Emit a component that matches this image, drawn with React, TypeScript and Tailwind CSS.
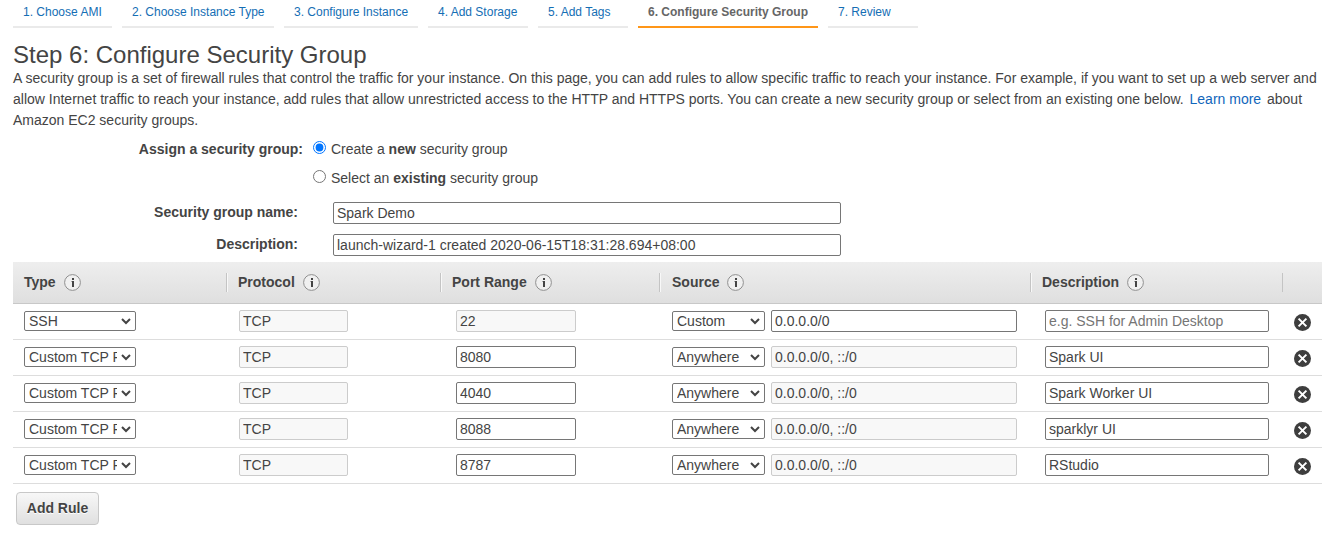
import React from "react";

const steps = [
  { label: "1. Choose AMI", width: "w-[99px]" },
  { label: "2. Choose Instance Type", width: "w-[152px]" },
  { label: "3. Configure Instance", width: "w-[134px]" },
  { label: "4. Add Storage", width: "w-[100px]" },
  { label: "5. Add Tags", width: "w-[90px]" },
  { label: "6. Configure Security Group", width: "w-[180px]", active: true },
  { label: "7. Review", width: "w-[90px]" },
];

const rules = [
  { type: "SSH", port: "22", source: "Custom", cidr: "0.0.0.0/0", description: "" },
  { type: "Custom TCP Rule", port: "8080", source: "Anywhere", cidr: "0.0.0.0/0, ::/0", description: "Spark UI" },
  { type: "Custom TCP Rule", port: "4040", source: "Anywhere", cidr: "0.0.0.0/0, ::/0", description: "Spark Worker UI" },
  { type: "Custom TCP Rule", port: "8088", source: "Anywhere", cidr: "0.0.0.0/0, ::/0", description: "sparklyr UI" },
  { type: "Custom TCP Rule", port: "8787", source: "Anywhere", cidr: "0.0.0.0/0, ::/0", description: "RStudio" },
];

const columns = "grid grid-cols-[213px_214px_219px_371px_252px_40px]";

function InfoIcon() {
  return (
    <svg width="17" height="17" viewBox="0 0 17 17" className="shrink-0">
      <circle cx="8.5" cy="8.5" r="7.9" fill="#f0f0f0" stroke="#8f8f8f" strokeWidth="1" />
      <rect x="8" y="4" width="2" height="2" fill="#444" />
      <path d="M7.2 7H10V13H8V7.6H7.2Z" fill="#444" />
    </svg>
  );
}

function RemoveIcon() {
  return (
    <svg width="17" height="17" viewBox="0 0 17 17">
      <circle cx="8.5" cy="8.5" r="8.5" fill="#3e3e3e" />
      <path d="M4.6 4.6L12.4 12.4M12.4 4.6L4.6 12.4" stroke="#fff" strokeWidth="2" />
    </svg>
  );
}

function TextField({
  value,
  width,
  disabled = false,
  placeholder,
}: {
  value: string;
  width: string;
  disabled?: boolean;
  placeholder?: string;
}) {
  return (
    <input
      type="text"
      defaultValue={value}
      disabled={disabled}
      placeholder={placeholder}
      className={`${width} h-[22px] shrink-0 rounded-[2px] border px-[3px] text-[14px] text-[#444] placeholder:text-[#757575] ${
        disabled ? "border-[#ccc] bg-[#f8f8f8]" : "border-[#767676] bg-white"
      }`}
    />
  );
}

function Select({ value, width }: { value: string; width: string }) {
  return (
    <div className={`${width} relative h-5 shrink-0`}>
      <select
        defaultValue={value}
        className="block h-5 w-full appearance-none rounded-[2px] border border-[#767676] bg-white pl-1 pr-[18px] text-[14px] leading-[18px] text-[#444]"
      >
        <option>{value}</option>
      </select>
      <svg width="10" height="7" viewBox="0 0 10 7" className="pointer-events-none absolute right-[5px] top-[7px]">
        <path d="M1 1L5 5L9 1" fill="none" stroke="#444" strokeWidth="2" />
      </svg>
    </div>
  );
}

function HeaderCell({ label, first = false, pad = "pl-[10px]" }: { label?: string; first?: boolean; pad?: string }) {
  return (
    <div className="flex h-[41px] items-center">
      {!first && (
        <span
          className={`-mt-px h-[19px] w-[2px] border-l border-l-[#c4c4c4] ${label ? "border-r border-r-[#f8f8f8]" : ""}`}
        />
      )}
      {label && (
        <div className={`flex items-center gap-[9px] ${pad}`}>
          <span className="-ml-px pl-px -mr-px">{label}</span>
          <InfoIcon />
        </div>
      )}
    </div>
  );
}

export default function App() {
  return (
    <div className="h-[536px] w-[1326px] overflow-hidden bg-white pl-[13px] font-['Liberation_Sans',Arial,sans-serif] text-[14px] text-[#444]">
      <nav className="flex h-7 gap-[10px] text-[12px]">
        {steps.map((step) => (
          <a
            key={step.label}
            className={`${step.width} h-7 whitespace-nowrap border-b-2 pl-[10px] pt-[4px] leading-4 ${
              step.active ? "border-[#ff9618] font-bold text-[#666]" : "border-[#eaeaea] text-[#146eb4]"
            }`}
          >
            {step.label}
          </a>
        ))}
      </nav>

      <h1 className="mt-[11px] h-[29px] whitespace-nowrap text-[24px] leading-[31px]">Step 6: Configure Security Group</h1>
      <div className="whitespace-nowrap leading-[21px]">
        <p>
          A security group is a set of firewall rules that control the traffic for your instance. On this page, you can
          add rules to allow specific traffic to reach your instance. For example, if you want to set up a web server
          and
        </p>
        <p>
          allow Internet traffic to reach your instance, add rules that allow unrestricted access to the HTTP and HTTPS
          ports. You can create a new security group or select from an existing one below.{" "}
          <a className="mx-[2px] text-[#1166bb]">Learn more</a> about
        </p>
        <p>Amazon EC2 security groups.</p>
      </div>

      <form className="h-[131px]">
        <div className="flex h-[29px] items-start pt-2 leading-[21px]">
          <span className="w-[290px] text-right font-bold">Assign a security group:</span>
          <input type="radio" name="group" defaultChecked className="ml-[10px] mt-[2px] h-[13px] w-[13px]" />
          <span className="ml-[5px]">
            Create a <b>new</b> security group
          </span>
        </div>
        <div className="flex h-[29px] items-start pl-[300px] pt-2 leading-[21px]">
          <input type="radio" name="group" className="mt-[2px] h-[13px] w-[13px]" />
          <span className="ml-[5px]">
            Select an <b>existing</b> security group
          </span>
        </div>
        <div className="mt-[13px] flex h-8 items-start">
          <span className="w-[285px] text-right font-bold leading-[20px]">Security group name:</span>
          <span className="ml-[35px] flex">
            <TextField value="Spark Demo" width="w-[508px]" />
          </span>
        </div>
        <div className="flex h-7 items-start">
          <span className="w-[285px] text-right font-bold leading-[20px]">Description:</span>
          <span className="ml-[35px] flex">
            <TextField value="launch-wizard-1 created 2020-06-15T18:31:28.694+08:00" width="w-[508px]" />
          </span>
        </div>
      </form>

      <section className="w-[1309px]">
        <div
          className={`${columns} h-[42px] border-b border-[#c8c8c8] bg-gradient-to-b from-[#eeeeee] to-[#dfdfdf] font-bold`}
        >
          <HeaderCell label="Type" first pad="pl-[11px]" />
          <HeaderCell label="Protocol" />
          <HeaderCell label="Port Range" />
          <HeaderCell label="Source" pad="pl-[11px]" />
          <HeaderCell label="Description" />
          <HeaderCell />
        </div>
        {rules.map((rule, i) => (
          <div key={rule.port} className={`${columns} h-9 items-center border-b border-[#ddd] pb-px`}>
            <div className="flex pl-[11px]">
              <Select value={rule.type} width="w-[112px]" />
            </div>
            <div className="flex pl-[13px]">
              <TextField value="TCP" width="w-[109px]" disabled />
            </div>
            <div className="flex pl-[16px]">
              <TextField value={rule.port} width="w-[120px]" disabled={i === 0} />
            </div>
            <div className="flex items-center gap-[6px] pl-[13px]">
              <Select value={rule.source} width="w-[93px]" />
              <TextField value={rule.cidr} width="w-[246px]" disabled={i !== 0} />
            </div>
            <div className="flex pl-[15px]">
              <TextField value={rule.description} width="w-[224px]" placeholder="e.g. SSH for Admin Desktop" />
            </div>
            <button type="button" aria-label="Remove" className="ml-3 mt-[3px] w-[17px]">
              <RemoveIcon />
            </button>
          </div>
        ))}
      </section>

      <button
        type="button"
        className="ml-[3px] mt-2 h-[33px] w-[83px] rounded-[4px] border border-[#c8c8c8] bg-gradient-to-b from-[#f7f7f7] to-[#e0e0e0] font-bold [text-shadow:0_1px_0_#fff]"
      >
        Add Rule
      </button>
    </div>
  );
}
